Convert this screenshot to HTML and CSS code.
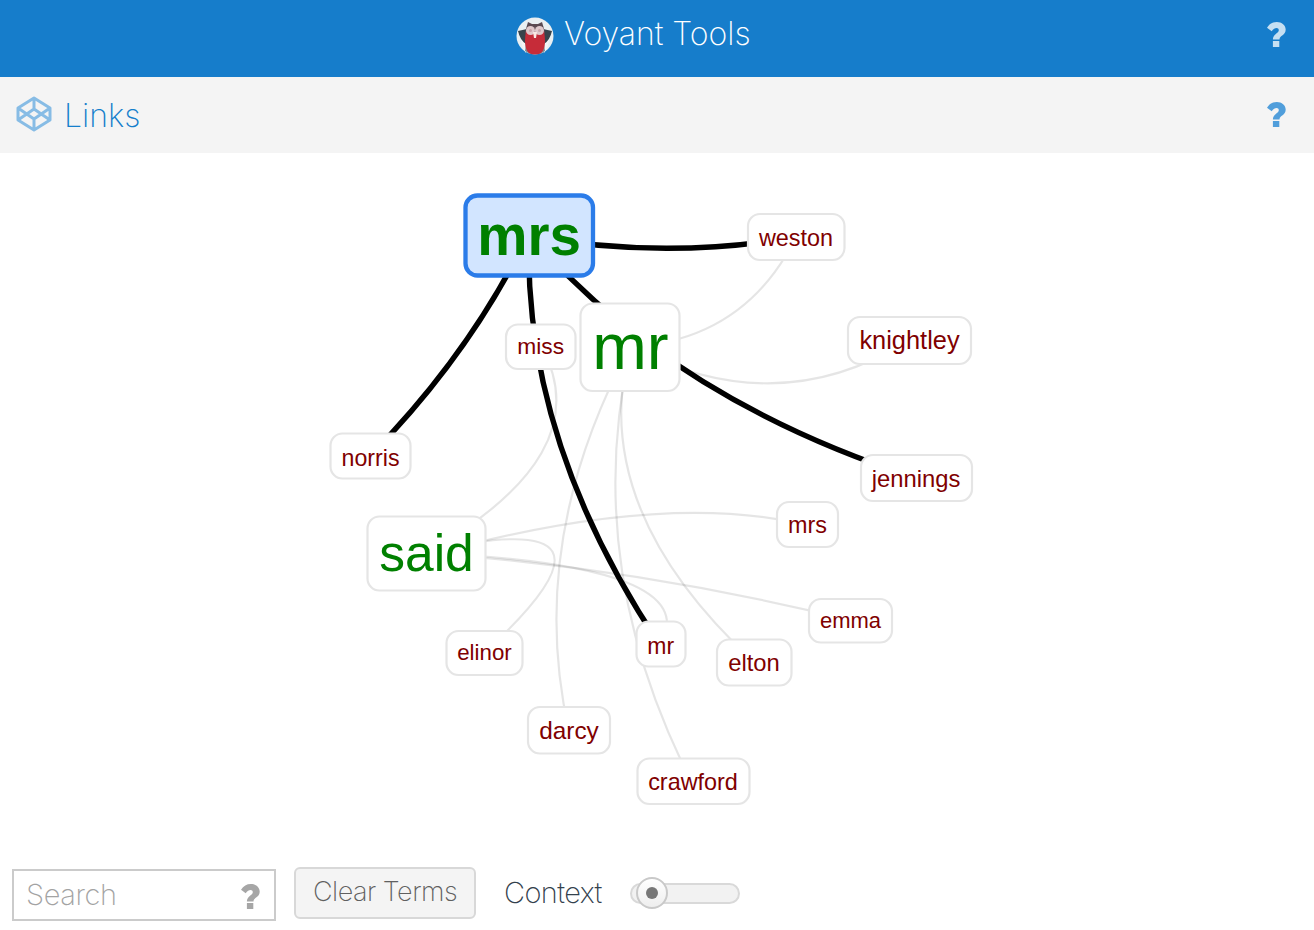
FILE: index.html
```html
<!DOCTYPE html>
<html lang="en">
<head>
<meta charset="utf-8">
<title>Voyant Tools</title>
<link rel="stylesheet" href="styles.css">
</head>
<body>
<svg class="defs" width="0" height="0">
  <symbol id="question" viewBox="0 0 19 25">
    <path d="M0 5.7C2.500 1.800 5.700 0 9.800 0C14.800 0 18.700 3.200 18.700 7.600C18.700 13.700 12.500 13.300 12.500 17.600H5.900C5.700 12.200 11.800 11.300 11.800 8.200C11.800 5.400 7.600 5 4.700 9.200ZM5.900 19H12.300V25H5.900Z"/>
  </symbol>
</svg>
<header class="app-header">
  <div class="brand">
    <svg class="logo" width="38" height="38" viewBox="0 0 38 38">
      <circle cx="19" cy="19" r="18.500" fill="#e9eff2"/>
      <path d="M1 15L11 12L12 28L10 36Q5 30 5 20ZM37 15L27 12L26 28L28 36Q33 30 33 20Z" fill="#f3f6f7"/>
      <path d="M2 14L11 12L10 27Q4 23 2 14ZM36 14L27 12L28 27Q34 23 36 14Z" fill="#38434b"/>
      <path d="M10 27L9 34L14 37H24L29 34L28 27Z" fill="#7d8a90"/>
      <path d="M12 5L16 7H22L26 5L29 15L27 20H11L9 15Z" fill="#5b4a52"/>
      <path d="M10 14Q19 19 28 14Q31 31 25 36Q19 39 13 36Q7 31 10 14Z" fill="#c62c39"/>
      <circle cx="14.500" cy="13.500" r="4.500" fill="#dfc9cc"/><circle cx="23.500" cy="13.500" r="4.500" fill="#dfc9cc"/>
      <circle cx="14.500" cy="13.500" r="1.500" fill="#c9a5aa"/><circle cx="23.500" cy="13.500" r="1.500" fill="#c9a5aa"/>
      <path d="M17 15H21L20 21H18Z" fill="#fbe9e4"/>
    </svg>
    <span class="brand-name">Voyant Tools</span>
  </div>
  <svg class="help help-light"><use href="#question"/></svg>
</header>
<section class="panel-header">
  <svg class="links-icon" width="36" height="36" viewBox="0 0 36 36">
    <path d="M18 2L34 12V24L18 34L2 24V12ZM18 2V12M18 24V34M2 12L18 23L34 12M2 24L18 13L34 24"/>
  </svg>
  <h1 class="panel-title">Links</h1>
  <svg class="help help-blue"><use href="#question"/></svg>
</section>
<main class="graph">
<svg width="1314" height="702" viewBox="0 153 1314 702">
  <g class="edge">
    <path d="M630 347Q745 340 796 237"/>
    <path d="M630 347Q778 423 909 340"/>
    <path d="M630 347Q587 508 754 662"/>
    <path d="M630 347Q526 541 569 731"/>
    <path d="M631 347Q581 564 691 781"/>
    <path d="M421 556Q602 455 541 346"/>
    <path d="M426 556Q660 490 807 525"/>
    <path d="M426 552Q650 501 484 653"/>
    <path d="M426 553Q708 565 660 645"/>
    <path d="M426 553Q638 568 850 620"/>
  </g>
  <g class="edge edge-active">
    <path d="M529 236Q665 260 796 237"/>
    <path d="M528 235Q471 353 370 456"/>
    <path d="M529 235Q523 440 660 645"/>
    <path d="M530 235Q671 399 916 478"/>
  </g>
  <g class="node">
    <rect x="506" y="324.500" width="69.500" height="44.500" rx="12"/>
    <rect x="748" y="214" width="96.500" height="46" rx="12"/>
    <rect x="848" y="317" width="123" height="47" rx="12"/>
    <rect x="861" y="455" width="111" height="46" rx="12"/>
    <rect x="777" y="502" width="61" height="45" rx="12"/>
    <rect x="809" y="599" width="83" height="43.500" rx="12"/>
    <rect x="717" y="639.500" width="74.500" height="46" rx="12"/>
    <rect x="636.500" y="621.500" width="49" height="45" rx="12"/>
    <rect x="637.500" y="758.500" width="112" height="45.500" rx="12"/>
    <rect x="528" y="707" width="82" height="46.500" rx="12"/>
    <rect x="446.500" y="631" width="76" height="44" rx="12"/>
    <rect x="330.500" y="433.500" width="80" height="45" rx="12"/>
    <rect x="580.500" y="303.500" width="99" height="87.500" rx="12"/>
    <rect x="367.500" y="516.500" width="118" height="74" rx="12"/>
    <rect class="selected" x="465.500" y="195.500" width="127.500" height="80" rx="12"/>
  </g>
  <g class="collocate">
    <text x="540.700" y="354" font-size="22.800">miss</text>
    <text x="796" y="246" font-size="23.400">weston</text>
    <text x="909.500" y="349" font-size="25.400">knightley</text>
    <text x="916" y="487" font-size="23.800">jennings</text>
    <text x="807.500" y="533" font-size="23.400">mrs</text>
    <text x="850.500" y="627.500" font-size="22">emma</text>
    <text x="754" y="671" font-size="23.800">elton</text>
    <text x="660.700" y="653.500" font-size="23">mr</text>
    <text x="693" y="790" font-size="23.400">crawford</text>
    <text x="569" y="739" font-size="24.400">darcy</text>
    <text x="484.500" y="660" font-size="22.300">elinor</text>
    <text x="370.500" y="465.500" font-size="23.200">norris</text>
  </g>
  <g class="keyword">
    <text x="630.500" y="369" font-size="65.500">mr</text>
    <text x="426.500" y="571" font-size="51.500">said</text>
    <text x="529" y="255" font-size="56.500" font-weight="bold">mrs</text>
  </g>
</svg>
</main>
<footer class="toolbar">
  <div class="search">
    <span class="placeholder">Search</span>
    <svg class="help help-gray"><use href="#question"/></svg>
  </div>
  <div class="button"><span class="button-label">Clear Terms</span></div>
  <span class="context">Context</span>
  <div class="slider"><div class="track"></div><div class="thumb"><div class="dot"></div></div></div>
</footer>
</body>
</html>
```
FILE: styles.css
```css
* { box-sizing: border-box; }
body {
  margin: 0;
  width: 1314px;
  height: 930px;
  overflow: hidden;
  background: #fff;
  font-family: Inter, "Liberation Sans", sans-serif;
  font-weight: 250;
  display: flex;
  flex-direction: column;
}
.defs { position: absolute; }
.app-header {
  height: 77px;
  flex: none;
  background: #167dcb;
  display: flex;
  align-items: flex-start;
  padding: 0 28px 0 516px;
}
.brand { display: flex; flex: 1; }
.logo { margin-top: 17px; }
.brand-name {
  margin-left: 10px;
  color: #fff;
  font-size: 32px;
  line-height: 40px;
  padding-top: 14px;
  white-space: nowrap;
}
.help { width: 19px; height: 25px; flex: none; }
.help-light { fill: #c5dff2; margin-top: 22px; }
.help-blue { fill: #509edb; margin-top: -1px; }
.help-gray { fill: #a6a6a6; margin-top: 2px; }
.panel-header {
  height: 76px;
  flex: none;
  background: #f4f4f4;
  display: flex;
  align-items: center;
  padding: 0 28px 0 16px;
}
.links-icon {
  fill: none;
  stroke: #87bce5;
  stroke-width: 3;
  stroke-linejoin: round;
  margin-top: -2px;
}
.panel-title {
  margin: 2px auto 0 12px;
  color: #157fcc;
  font-size: 32px;
  font-weight: 250;
  line-height: 40px;
}
.graph { height: 702px; flex: none; }
.graph svg { display: block; }
.edge path { fill: none; stroke: #000; stroke-opacity: .1; stroke-width: 2.2; }
.edge-active path { stroke-opacity: 1; stroke-width: 5.4; }
.node rect { fill: #fff; stroke: #e5e5e5; stroke-width: 2.2; }
.node .selected { fill: #d2e5ff; stroke: #2b7ce9; stroke-width: 4.3; }
.graph text { font-family: "Liberation Sans", Arial, sans-serif; text-anchor: middle; font-weight: 400; }
.graph text[font-weight="bold"] { font-weight: 700; }
.collocate { fill: #800000; }
.keyword { fill: #008000; }
.toolbar {
  height: 75px;
  flex: none;
  display: flex;
  align-items: flex-start;
  padding: 12px 12px 0;
  font-size: 29px;
  line-height: 36px;
  white-space: nowrap;
}
.search {
  width: 264px;
  height: 52px;
  margin-top: 2px;
  border: 2px solid #cbcbcb;
  display: flex;
  justify-content: space-between;
  align-items: center;
  padding: 0 14px 0 12px;
  color: #a3a3a3;
  letter-spacing: -.4px;
}
.button {
  width: 182px;
  height: 52px;
  margin-left: 18px;
  border: 2px solid #d8d8d8;
  border-radius: 6px;
  background: #f4f4f4;
  color: #606060;
  font-size: 27px;
  letter-spacing: -.5px;
  padding: 5px 0 0 17px;
}
.context { margin: 8px 0 0 28px; width: 126px; color: #33414d; letter-spacing: -.6px; }
.slider { width: 110px; height: 34px; margin-top: 9px; display: grid; align-items: center; }
.track {
  grid-area: 1 / 1;
  height: 21px;
  border: 2px solid #d9d9d9;
  border-radius: 11px;
  background: #f2f2f2;
}
.thumb {
  grid-area: 1 / 1;
  z-index: 1;
  width: 32px;
  height: 32px;
  margin-left: 6px;
  border: 2px solid #c9c9c9;
  border-radius: 50%;
  background: linear-gradient(#fff, #eee);
  display: flex;
  align-items: center;
  justify-content: center;
}
.dot { width: 12px; height: 12px; border-radius: 50%; background: #777; }
```
